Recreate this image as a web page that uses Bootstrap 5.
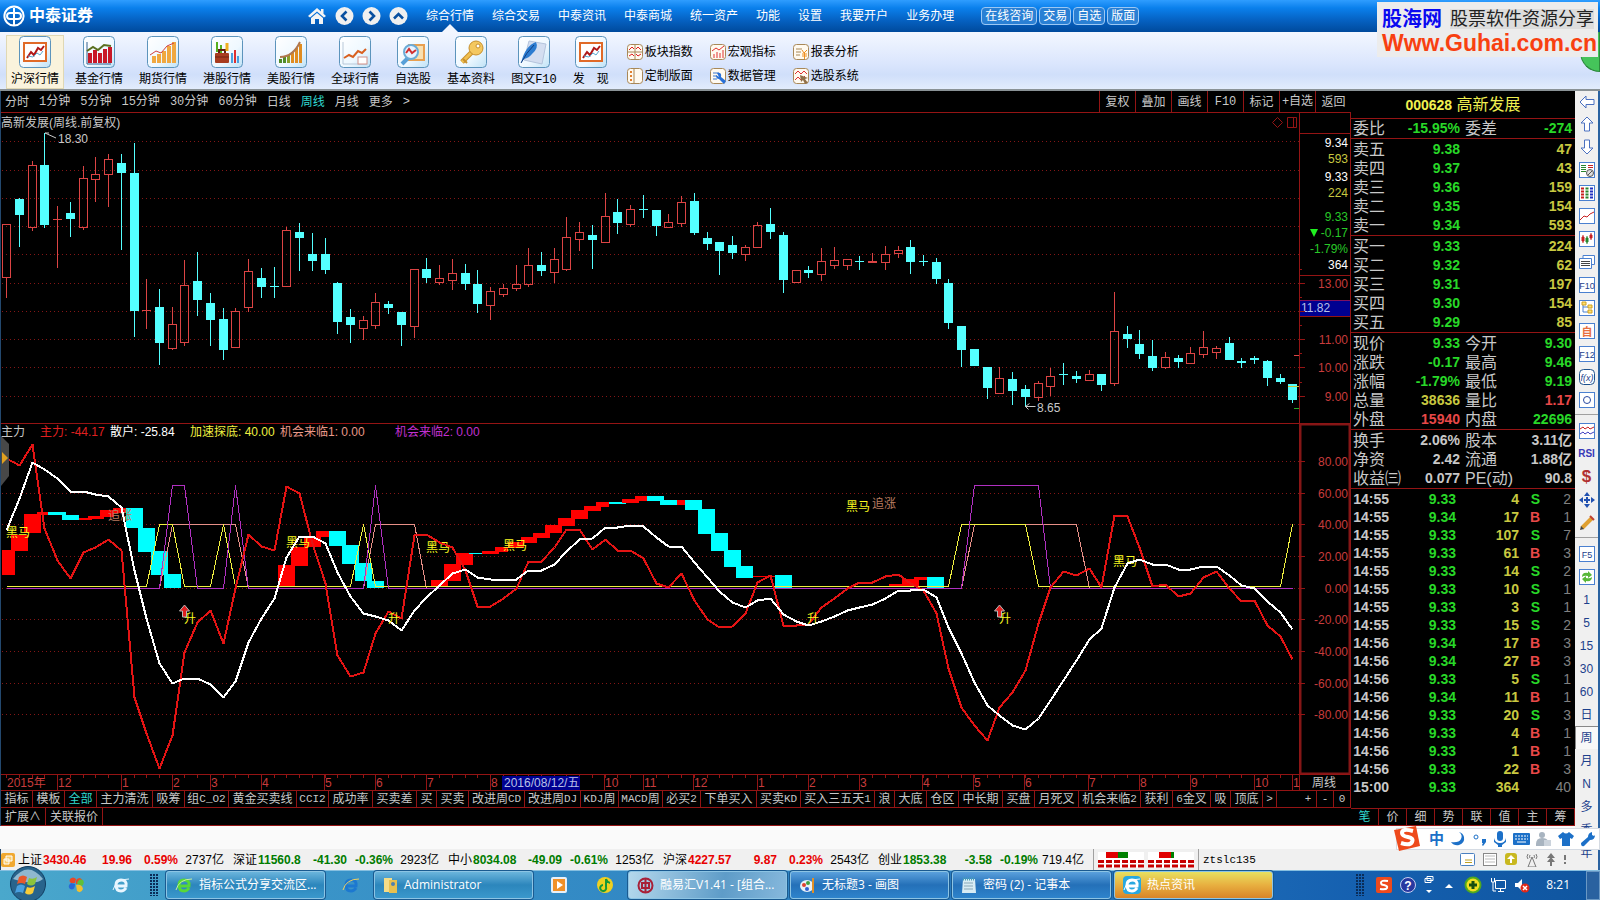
<!DOCTYPE html>
<html lang="zh-CN">
<head>
<meta charset="utf-8">
<meta name="viewport" content="width=device-width, initial-scale=1">
<title>中泰证券 - 高新发展</title>
<link rel="stylesheet" href="https://cdn.jsdelivr.net/npm/bootstrap@5.3.0/dist/css/bootstrap.min.css">
<style>
body{font:12px/16px "Liberation Sans","Noto Sans CJK SC",sans-serif;background:#000;color:#000}
a{color:inherit;text-decoration:none}
button{font:inherit;color:inherit;background:none;border:0;padding:0;white-space:nowrap}
svg{display:block;flex:none}
.half{font-family:"Liberation Mono",monospace;font-size:11px}
/* title bar */
.topbar{height:32px;background:linear-gradient(#2f9dff,#0a80ec 25%,#0560c0 65%,#004a9c);color:#fff}
.brandbox{width:307px;padding-left:3px}
.brandbox b{font-size:16px}
.navbtns{gap:8px}
.mainmenu{gap:18px;padding-left:18px}
.mainmenu a{line-height:32px;position:relative}
.mainmenu a.on::after{content:"";position:absolute;left:50%;bottom:0;margin-left:-8px;border:8px solid transparent;border-top:0;border-bottom-color:#f2f6fe}
.pills{gap:2px;padding-left:27px}
.pill{border:1px solid #9cc8f4;border-radius:4px;height:18px;line-height:16px;padding:0 3px;background:#2a80d4}
/* tool bar */
.tools{height:59px;background:linear-gradient(#f3f7ff,#dbe6fd 55%,#d0dffa 75%,#e2ecfc);border-bottom:2px solid #8a9296;padding-left:3px}
.tool{padding:4px 8px 0;text-align:center;line-height:19px}
.tool .half{font-size:12px}
.tool svg{margin:0 auto 2px}
.tool.on{background:#faf3dc;box-shadow:inset 0 0 0 1px #e0d8b4;margin:3px 3px 0 3px;padding:1px 5px 0}
.minitools{display:grid;grid-template-columns:repeat(3,83px);row-gap:8px;padding:12px 0 0 10px;align-content:start}
.minitools button{display:flex;gap:2px;align-items:center;height:16px}
/* watermark */
.mark-box{position:absolute;right:2px;top:2px;width:221px;height:55px;background:#ececec;padding:4px 0 0 5px;z-index:3;white-space:nowrap}
.mark-box .nm{font-size:20px;line-height:26px;font-weight:bold;color:#0a0af0}
.mark-box .sl{font-size:18px;line-height:20px;color:#222;background:#ddd}
.mark-box .ur{font-size:23px;line-height:22px;font-weight:bold;color:#f84010}
.orb{position:absolute;right:0;top:32px;width:20px;height:40px;border-radius:20px 0 0 20px;background:#45c45a;border:1px solid #2c8a3c;z-index:2}
/* charts */
.leftedge{border-left:1px solid #23486e;min-width:0}
.period{height:22px;border-bottom:1px solid #941414;color:#c8c8c8;line-height:20px}
.period .half{font-size:12px}
.period .rng{gap:10px;padding-left:4px}
.period .ops button{width:36px;border-left:1px solid #941414;text-align:center}
.on-c{color:#30d8d0!important}
.chart{width:100%;height:auto}
.chart text{font:12px "Liberation Sans","Noto Sans CJK SC",sans-serif}
.tabrow{border-top:1px solid #941414;height:17px;color:#c8c8c8;overflow:hidden}
.tabrow button{border-right:1px solid #941414;line-height:16px;display:flex;justify-content:center;align-items:center}
.tabrow.low{height:19px;border-bottom:1px solid #941414}
.tabrow.low button{line-height:16px;padding:0 4px}
/* quotes */
.side{width:224px;color:#c8c8c8;background:#000}
.side h1{font:16px/27px "Liberation Sans","Noto Sans CJK SC",sans-serif;height:28px;margin:0;color:#f0f050;border-bottom:1px solid #941414;text-align:center}
.side h1 b{font-size:14px}
.q{width:100%;table-layout:fixed;border-collapse:separate;border-spacing:0;border-bottom:1px solid #941414;padding-top:1px}
.q.first{padding:0}
.q td,.q th{padding:0;height:19px;line-height:19px;font-size:16px;font-weight:normal;white-space:nowrap}
.q th{padding-left:2px}
.q td{font-size:14px;font-weight:bold;text-align:right}
.q td:last-child{padding-right:3px}
.tk td{padding:0;height:18px;line-height:18px;font-size:14px;font-weight:bold;text-align:right}
.tk{width:100%;table-layout:fixed;margin-top:1px}
.g{color:#28d828}.y{color:#c8c840}.r{color:#e84848}.n{color:#808080}
.sidetabs{border-top:1px solid #941414;border-bottom:1px solid #941414;height:18px}
.sidetabs button{flex:1;border-right:1px solid #941414;line-height:16px}
/* right icon strip */
.strip{width:25px;background:#f0f0f0;border-right:2px solid #2a62a0;color:#1c3f8c}
.strip button{height:23px;width:23px;display:flex;align-items:center;justify-content:center}
.strip button:first-child{height:21px}
.strip .sep{height:8px;border:0;margin:0;opacity:1;background:linear-gradient(transparent 3px,#a0a0a0 3px,#a0a0a0 4px,transparent 4px)}
.strip .sel{background:#f8f8f8;box-shadow:inset 1px 1px #888}
/* bottom */
.blank{height:23px;background:#fafafa}
.ime{position:absolute;right:0;bottom:50px;width:204px;height:22px;background:#fff;border:1px solid #d5dbe3;z-index:4}
.ime>.logo{position:absolute;left:-4px;top:-4px}
.status{height:21px;background:#f0f0f0;line-height:22px}
.idx{display:grid;grid-template-columns:25px 46px 43px 46px 46px;width:215px;text-align:right;white-space:nowrap}
.idx span:first-child,.idx b:nth-child(2){text-align:left}
.up b{color:#e80000}.dn b{color:#007c00}
.lamps{border:solid #a0a0a0;border-width:0 1px}
.task{height:30px;background:linear-gradient(90deg,#4aa8cc,#3a94c8 20%,#2a7cc0 60%,#1560b0 85%,#0f559f);color:#fff;box-shadow:inset 0 1px #86bfe0;position:relative}
.task .win{width:159px;height:28px;margin-right:3px;border:1px solid #8cc4e4;border-radius:3px;background:linear-gradient(#6ab4dc,#2c86bc 50%,#3a98cc);text-align:left;padding-left:8px;display:flex;align-items:center;gap:6px;font-family:"Open Sans","Noto Sans CJK SC",sans-serif;box-shadow:0 0 0 1px #1a5a90}
.task .win.b{background:linear-gradient(#5aa0dc,#2470b8 50%,#2e84cc)}
.task .win.a{background:linear-gradient(100deg,#b4d8ec,#5e9cc8 60%,#86b8dc)}
.task .win.h{background:linear-gradient(#e8e060,#e8b040 50%,#d88428)}
.start{width:60px;height:30px;padding-left:9px}
.start svg{margin-top:-4px}
.deskbtn{width:14px;height:29px;border:1px solid #6a98c4;background:#2a62a0}
.dots{width:8px;height:22px;background:radial-gradient(circle at 1px 1px,#0a2c58 1px,transparent 1px) 0 0/3px 3px}
</style>
</head>
<body class="position-relative">
<header class="topbar d-flex align-items-center">
  <div class="brandbox d-flex align-items-center gap-1">
    <svg width="22" height="22" viewBox="0 0 22 22" fill="none" stroke="#fff" stroke-width="2"><circle cx="11" cy="11" r="9.6"/><path d="M11 3v17M7 8h8q3 0 3 3t-3 3H7q-3 0-3-3t3-3z"/></svg>
    <b>中泰证券</b>
  </div>
  <div class="navbtns d-flex">
    <button aria-label="首页"><svg width="20" height="20" viewBox="0 0 20 20" fill="#f4f4f4"><path d="M10 2 1 10l2 1.500 7-6 7 6 2-1.500-2.500-2.300V3H14v2.600z"/><path d="M4 12l6-5 6 5v6h-4v-5H8v5H4z"/></svg></button>
    <button aria-label="后退"><svg width="19" height="20" viewBox="0 0 19 20"><circle cx="9.500" cy="10" r="9" fill="#f0f0f0"/><path d="M11.500 5.500 7 10l4.500 4.500" fill="none" stroke="#0a50a0" stroke-width="2.600"/></svg></button>
    <button aria-label="前进"><svg width="19" height="20" viewBox="0 0 19 20"><circle cx="9.500" cy="10" r="9" fill="#f0f0f0"/><path d="M7.500 5.500 12 10l-4.500 4.500" fill="none" stroke="#0a50a0" stroke-width="2.600"/></svg></button>
    <button aria-label="向上"><svg width="19" height="20" viewBox="0 0 19 20"><circle cx="9.500" cy="10" r="9" fill="#f0f0f0"/><path d="M5 12.500 9.500 8l4.500 4.500" fill="none" stroke="#0a50a0" stroke-width="2.600"/></svg></button>
  </div>
  <nav class="mainmenu d-flex">
    <a href="#" class="on">综合行情</a><a href="#">综合交易</a><a href="#">中泰资讯</a><a href="#">中泰商城</a><a href="#">统一资产</a><a href="#">功能</a><a href="#">设置</a><a href="#">我要开户</a><a href="#">业务办理</a>
  </nav>
  <div class="pills d-flex">
    <button class="pill">在线咨询</button><button class="pill">交易</button><button class="pill">自选</button><button class="pill">版面</button>
  </div>
</header>
<div class="mark-box"><div class="d-flex align-items-center gap-2"><span class="nm">股海网</span><span class="sl">股票软件资源分享</span></div><div class="ur">Www.Guhai.com.cn</div></div>
<div class="orb"></div>
<div class="tools d-flex" id="tools"></div>

<main class="d-flex">
  <div class="flex-grow-1" style="min-width:0">
    <div class="d-flex">
      <section class="leftedge flex-grow-1">
        <div class="period d-flex justify-content-between">
          <div class="rng d-flex" id="periods"></div>
          <div class="ops d-flex" id="ops"></div>
        </div>
        <svg class="chart" id="chart" viewBox="1 113 1350 677"></svg>
        <div class="tabrow d-flex"><div class="d-flex" id="tabs"></div>
          <div class="d-flex ms-auto" id="zoomers"></div></div>
        <div class="tabrow low d-flex"><button>扩展∧</button><button>关联报价</button></div>
      </section>
      <aside class="side d-flex flex-column">
        <h1><b>000628</b> 高新发展</h1>
        <div id="quotes"></div>
        <table class="tk" id="ticks"><colgroup><col style="width:38px"><col style="width:67px"><col style="width:63px"><col style="width:21px"><col></colgroup></table>
        <div class="sidetabs d-flex mt-auto"><button class="on-c">笔</button><button>价</button><button>细</button><button>势</button><button>联</button><button>值</button><button>主</button><button>筹</button></div>
      </aside>
    </div>
    <div class="blank"></div>
    <div class="status d-flex leftedge" id="status"></div>
  </div>
  <div class="strip" id="strip"></div>
</main>

<div class="ime d-flex align-items-center justify-content-between ps-4 pe-1">
  <svg class="logo" width="28" height="27" viewBox="0 0 28 27"><path d="M1 5 23 1l4 20-21 5z" fill="#ee4a1c"/><path d="M20 6q-11-3-11 2 0 3 6 4t4 5q-2 4-11 1" fill="none" stroke="#fff" stroke-width="4"/></svg>
  <span class="fw-bold ms-2" style="color:#1c70c8;font-size:15px">中</span>
  <svg width="16" height="16" fill="#1c70c8"><path d="M9 1q4 3 2 7T1 11q3 4 8 3 6-2 5-8-1-4-5-5z"/></svg>
  <svg width="14" height="16" fill="#1c70c8"><circle cx="3" cy="6" r="2" fill="none" stroke="#1c70c8"/><path d="M9 8h4v3l-3 4-1-1 1-2H9z"/></svg>
  <svg width="14" height="18" fill="#1c70c8"><rect x="4" y="1" width="6" height="10" rx="3"/><path d="M1 8q1 5 6 5t6-5v4l-4 3v2H5v-2l-4-3z"/></svg>
  <svg width="17" height="16"><rect x="0" y="2" width="17" height="12" rx="1" fill="#1c70c8"/><path d="M2 5h13M2 8h13" stroke="#fff" stroke-dasharray="2 1"/><path d="M4 11h9" stroke="#fff"/></svg>
  <svg width="15" height="16" fill="#a8b4c0"><circle cx="6" cy="4" r="3"/><path d="M0 13q0-6 6-6 5 0 6 3v5H0z"/><path d="M8 9h7v6H8z" fill="#cbd3dc"/></svg>
  <svg width="16" height="16" fill="#1c70c8"><path d="M5 1q3 3 6 0l5 4-2 3-2-1v8H4V7L2 8 0 5z"/></svg>
  <svg width="15" height="16" fill="#1c70c8"><path d="m1 12 7-6q0-4 4-5v3l2 1 1-1q0 5-5 5l-6 6q-3 1-3-3z"/></svg>
</div>

<footer class="task d-flex align-items-center" id="task"></footer>

<script src="https://cdn.jsdelivr.net/npm/bootstrap@5.3.0/dist/js/bootstrap.bundle.min.js"></script>
<script>
const $ = id => document.getElementById(id);
const half = s => s.replace(/[\x21-\x7e]+/g, m => `<span class="half">${m.replace('>', '&gt;')}</span>`);
const cells = s => [...s].reduce((n, c) => n + (c < '\x7f' ? 6 : 12), 0);

/* ---- tool bar ---- */
const redChart = '<rect x="5" y="7" width="22" height="18" fill="#fff" stroke="#e06a28" stroke-width="2"/><path d="M8 22l4-6 3 3 4-7 3 2 3-4" fill="none" stroke="#b01818" stroke-width="2"/><path d="M9 20l5 1 4-4 3 2 3-4" fill="none" stroke="#58a8d0"/>';
const bars = (c, h, x = 6, w = 4) => h.map((v, i) => `<rect x="${x + i * (w + 1)}" y="${27 - v}" width="${w}" height="${v}" fill="${c}"/>`).join('');
const toolArt = [
  redChart,
  '<path d="M4 6v22h24" fill="none" stroke="#346090"/>' + bars('#c81828', [10, 13, 10, 14, 16], 5) + '<path d="M4 15l6-4 5 3 6-5 7 1" fill="none" stroke="#5a7020" stroke-width="2"/>',
  bars('#f0a840', [7, 9, 12, 17, 21], 5) + '<path d="M3 19l6-4 5 2 6-7 7-3" fill="none" stroke="#d04040"/>',
  '<path d="M6 6v10M10 9v8" stroke="#58b020" stroke-width="2"/><rect x="4" y="17" width="14" height="10" rx="1" fill="#a83c20"/><path d="M4 21h14" stroke="#702010"/><path d="M8 17v-3h6v3" fill="none" stroke="#602010" stroke-width="2"/><path d="M16 7v8" stroke="#f0b020" stroke-width="3"/><path d="M21 27V17M27 27V20" stroke="#4aa0e0" stroke-width="2"/><path d="M24 27V14" stroke="#e03030" stroke-width="2"/>',
  bars('#508c28', [4, 6], 4, 3) + bars('#88a028', [8], 12, 3) + bars('#e08c20', [11, 15, 19], 16, 3) + '<path d="M5 21q13 0 20-15" fill="none" stroke="#b07850" stroke-width="2"/>',
  '<path d="M4 6v22h24" fill="none" stroke="#b8c8d8"/><path d="M5 22l5-3 4 2 5-6 4 2 4-4" fill="none" stroke="#d86020" stroke-width="2"/><rect x="19" y="21" width="9" height="7" fill="#fff" stroke="#d09088"/>',
  '<rect x="12" y="9" width="15" height="15" fill="#f8e0b0" stroke="#e8a050" stroke-width="2"/><path d="M5 28l6-6" stroke="#58a0d8" stroke-width="4"/><circle cx="14" cy="16" r="7" fill="#e8f4ff" stroke="#6aacd8" stroke-width="2"/><path d="M9 17l3-4 3 4 4-3" fill="none" stroke="#d03030" stroke-width="2"/>',
  '<path d="M18 15 7 26" stroke="#c8902c" stroke-width="5"/><path d="M18 15 7 26" stroke="#f0c050" stroke-width="3"/><path d="M8 23l4 4" stroke="#c8902c" stroke-width="2"/><circle cx="21" cy="12" r="7" fill="#f4c860" stroke="#c8902c"/><circle cx="23" cy="10" r="2" fill="#fff" stroke="#c8902c"/>',
  '<path d="M11 5l17 3-4 20-18-4z" fill="#d4def0" stroke="#b4c4dc"/><path d="M3 27Q7 10 18 6q3 6-4 12-3 4-8 5z" fill="#2c7cd0"/><path d="M3 27Q8 17 16 9" fill="none" stroke="#103c80"/>',
  redChart];
const toolNames = ['沪深行情', '基金行情', '期货行情', '港股行情', '美股行情', '全球行情', '自选股', '基本资料', '图文F10', '发　现'];
$('tools').innerHTML = `<svg width="0" height="0" class="position-absolute"><linearGradient id="tile" x2="1" y2="1"><stop stop-color="#fff"/><stop offset=".6" stop-color="#eef8ff"/><stop offset="1" stop-color="#bfe2f6"/></linearGradient></svg>` +
  toolNames.map((n, i) => `<button class="tool${i ? '' : ' on'}"><svg width="32" height="32" viewBox="0 0 32 32"><rect x=".5" y=".5" width="31" height="31" rx="4" fill="url(#tile)" stroke="#5c94bc"/>${toolArt[i]}</svg>${half(n)}</button>`).join('');
const tileR = '<rect x=".5" y=".5" width="15" height="15" rx="3" fill="#fffaf0" stroke="#a88858"/>';
const miniArt = {
  板块指数: '<path d="M8 1v14M1 8h14" stroke="#a88858"/><path d="M2 6l3-3 2 2M9 5l2-2 3 3M2 12l3-2 2 2M9 10l2 2 3-2" fill="none" stroke="#e02020"/>',
  宏观指标: '<path d="M4 14v-4M7 14V8M10 14v-5M13 14V6M2 7l4-3 3 2 5-4" fill="none" stroke="#e03030"/>',
  报表分析: '<path d="M3 5h6M3 8h5M3 11h4" stroke="#a88858"/><path d="M9 6l2 3 3-3M9 10h5M9 12h5M11.500 9v6" stroke="#f09020" fill="none"/>',
  定制版面: '<path d="M7 1v14" stroke="#a88858"/><path d="M4 3v10" stroke="#e08030" stroke-width="2" stroke-dasharray="2 2"/>',
  数据管理: '<path d="M3 5h6M3 8h4M3 11h4" stroke="#3878d0"/><path d="M7 5q5-1 4 4l5 4-2 3-5-5q-3 0-3-4l3 2z" fill="#2870d8"/>',
  选股系统: '<path d="M2 6l3-3 3 3 3-3 3 3M2 12l3-3 3 3 4-4" fill="none" stroke="#e03030"/><path d="M7 7l8 3-3 1 3 4-3 1-2-4-2 2z" fill="#907048"/>'};
$('tools').innerHTML += '<div class="minitools">' + Object.entries(miniArt).map(([n, a]) => `<button><svg width="16" height="16" viewBox="0 0 16 16">${tileR}${a}</svg>${n}</button>`).join('') + '</div>';

/* ---- period bar and tab rows ---- */
$('periods').innerHTML = ['分时', '1分钟', '5分钟', '15分钟', '30分钟', '60分钟', '日线', '周线', '月线', '更多', '>'].map(n => `<button class="${n == '周线' ? 'on-c' : ''}">${half(n)}</button>`).join('');
$('ops').innerHTML = ['复权', '叠加', '画线', 'F10', '标记', '+自选', '返回'].map(n => `<button>${half(n)}</button>`).join('');
$('tabs').innerHTML = '指标 模板 全部 主力清洗 吸筹 组C_O2 黄金买卖线 CCI2 成功率 买卖差 买 买卖 改进周CD 改进周DJ KDJ周 MACD周 必买2 下单买入 买卖KD 买入三五天1 浪 大底 仓区 中长期 买盘 月死叉 机会来临2 获利 6金叉 吸 顶底 >'.split(' ')
  .map(n => `<button class="${n == '全部' ? 'on-c' : ''}" style="width:${cells(n) + 8}px">${half(n)}</button>`).join('');
$('zoomers').innerHTML = ['+', '-', '0'].map(n => `<button style="width:17px">${half(n)}</button>`).join('');

/* ---- charts ---- */
const X = i => Math.floor(6.7 + i * 12.733) + .5;
const candles = `r224,224,277,297 c198,199,215,246 r161,165,227,230 c133,165,225,227 r206,219,220,267 c202,213,219,236 r166,178,227,229 r157,174,179,201 r154,159,174,206 c154,163,173,249 c143,173,311,336 r279,310,311,328 c289,307,343,364 r307,324,348,349 r260,285,342,345 c252,281,300,315 c293,303,320,345 c308,319,350,359 r308,311,347,347 r259,271,307,311 c268,278,287,297 c267,286,287,297 r227,230,286,286 c223,232,238,270 c233,254,261,270 c238,254,270,273 c282,283,322,333 c309,317,325,342 r316,320,328,339 r293,302,325,328 c301,304,308,313 c312,312,325,345 r269,269,326,337 c258,269,278,282 r265,278,282,284 r259,273,280,289 c264,273,284,289 c270,284,304,312 r287,291,305,319 r284,288,294,296 r265,284,288,290 r248,265,284,286 c252,265,271,275 r248,259,272,282 r217,237,269,270 r222,232,239,250 c225,235,240,268 r193,216,242,242 c199,212,223,233 r205,209,224,226 c195,209,210,217 c210,210,226,235 r214,222,227,227 r196,202,223,226 c193,201,233,234 c232,238,244,249 c242,242,251,274 c236,245,253,258 r245,247,254,260 r222,225,247,247 c208,224,232,238 c232,235,280,292 r270,270,282,282 c266,270,273,277 r248,261,274,280 r247,260,265,268 r259,259,265,269 c256,261,262,269 r253,261,263,263 r246,254,262,269 r246,250,253,257 c240,247,262,273 c255,261,262,265 c258,262,279,283 c279,283,323,328 c326,326,350,366 c349,349,366,366 c367,367,388,398 r367,378,393,393 c372,379,391,404 c385,389,397,406 r381,383,397,400 r368,376,386,395 c363,374,375,384 c371,376,379,382 r370,374,380,380 c374,374,385,390 r292,331,383,385 c326,334,339,347 c330,344,354,358 c340,356,368,370 r352,357,367,368 c355,358,362,367 r347,353,363,363 r331,347,354,357 r346,348,352,358 c337,343,360,360 c358,361,363,367 c356,358,360,363 c360,361,378,385 c374,378,382,383 c384,384,400,402`.split(' ');
const red = [458,465,444,528,560,578,552,547,539,550,697,733,768,735,652,622,610,643,588,534,546,550,486,493,543,583,655,676,672,633,611,618,535,534,542,547,570,606,606,598,588,561,561,547,529,529,549,539,550,550,558,583,587,573,600,619,627,626,613,582,575,625,625,624,607,598,588,582,582,576,574,583,590,613,668,707,725,740,707,692,670,623,587,571,575,568,587,515,516,547,586,584,596,593,577,571,588,601,600,625,636,659];
const white = [530,498,462,469,478,491,491,494,496,507,570,618,663,683,678,678,684,697,681,642,618,598,557,536,536,543,572,596,613,616,620,630,610,597,585,573,569,577,579,579,579,570,570,564,551,539,538,527,527,525,526,537,546,546,562,577,591,602,607,600,598,614,621,625,621,616,610,607,604,598,590,590,589,597,627,653,682,705,715,725,729,718,700,680,660,639,628,587,563,559,564,564,569,569,566,566,575,585,588,601,612,629];
const signal = (base, top, spans) => Array.from({length: 102}, (_, i) => spans.some(([a, b]) => i >= a && i <= b) ? top : base);
const blocks = `r2,15,550,575 r11,28,535,551 r24,41,514,533 r37,49,512,515 c48,66,512,515 c62,79,515,520 r79,92,518,520 r88,104,516,519 r100,114,510,517 r113,130,508,513 c126,143,508,528 c138,155,528,552 c151,168,551,575 c164,181,574,588 r278,295,565,587 r291,308,547,566 r304,321,537,547 r316,329,531,537 c329,346,531,546 c342,359,545,564 c355,372,563,581 c367,384,581,588 r431,448,580,586 r444,461,564,581 r456,473,553,565 c469,486,553,554 r482,499,551,554 r495,508,547,552 r508,524,542,548 r521,537,537,543 r533,550,533,538 r545,562,525,533 r558,575,518,526 r571,588,510,519 r584,601,506,511 r596,609,502,507 c609,626,502,504 r622,639,499,503 r635,647,496,501 c647,664,496,501 c660,677,500,505 r677,685,500,505 c685,702,500,510 c698,715,509,534 c711,728,533,551 c724,741,550,567 c736,753,566,578 r753,775,576,577 c775,792,575,588 r889,907,584,587 r902,919,579,586 r914,927,577,580 c927,944,577,588`.split(' ');
const path = (ys, c, w) => `<polyline points="${ys.map((y, i) => X(i) + ',' + (y + .5)).join(' ')}" fill="none" stroke="${c}" stroke-width="${w}" stroke-linejoin="bevel" shape-rendering="crispEdges"/>`;
const T = (x, y, s, c, a = 'start') => `<text x="${x}" y="${y + 4}" fill="${c}" text-anchor="${a}">${s}</text>`;
const L = (x1, y1, x2, y2, c = '#941414', w = 1) => `<path d="M${x1} ${y1}L${x2} ${y2}" stroke="${c}" stroke-width="${w}"/>`;
let s = '<rect x="1" y="113" width="1350" height="677"/>';
for (const y of [141,170,198,226,254,283,311,339,367,396,461,493,524,556,588,619,651,683,714])
  s += `<path d="M2 ${y + .5}H1299" stroke="#841616" stroke-dasharray="1 3"/>`;
candles.forEach((k, i) => {
  const [h, t, b, l] = k.slice(1).split(',').map(Number), x = X(i), up = k[0] == 'r', c = up ? '#dc4444' : '#54ffff';
  s += L(x, h, x, t, c) + L(x, b, x, l + (l > b), c);
  if (up && b - t > 2) s += `<rect x="${x - 4}" y="${t + .5}" width="8" height="${b - t}" fill="none" stroke="${c}"/>`;
  else s += `<rect x="${x - 4.5}" y="${t}" width="9" height="${Math.max(1, b - t)}" fill="${c}"/>`;
});
s += L(45, 133, 56, 138, '#c8c8c8') + L(45, 133, 49, 133, '#c8c8c8') + T(58, 139, '18.30', '#c8c8c8') + T(1, 123, '高新发展(周线.前复权)', '#c8c8c8');
s += '<path d="M1035.500 406.500h-10l4-3m-4 3l3 3" fill="none" stroke="#c8c8c8"/>' + T(1037, 408, '8.65', '#c8c8c8');
s += '<path d="M1277.500 117.500l5 5-5 5-5-5zM1287.500 117.500h9v10h-9zM1293.500 117v10" fill="none" stroke="#941414"/>';
s += L(1288, 386.5, 1299, 386.5, '#c8c840') + L(1294, 355.5, 1299, 355.5, '#dc4444') + L(1294, 408.5, 1299, 408.5, '#28a828');
/* price scale */
s += L(1299.5, 113, 1299.5, 790) + L(1350.5, 113, 1350.5, 790) + L(1299, 133.5, 1350, 133.5) + L(1299, 275.5, 1350, 275.5);
[[143,'9.34','#fff'],[159,'593','#c8c840'],[177,'9.33','#fff'],[193,'224','#c8c840'],[217,'9.33','#28c828'],[233,'-0.17','#28c828'],[249,'-1.79%','#28c828'],[265,'364','#fff'],[284,'13.00','#c83c3c'],[340,'11.00','#c83c3c'],[368,'10.00','#c83c3c'],[397,'9.00','#c83c3c']].forEach(a => s += T(1348, a[0], a[1], a[2], 'end'));
s += '<path d="M1310 229h8l-4 8z" fill="#20f020"/><rect x="1300" y="301" width="50" height="15" fill="#000090"/>' + L(1300, 300.5, 1350, 300.5, '#801060') + L(1300, 316.5, 1350, 316.5) + T(1301, 308, '11.82', '#b8c0e8');
for (const y of [283, 311, 339, 367, 396]) s += L(1299, y + .5, 1305, y + .5) + L(1299, y - 13.5, 1302, y - 13.5);
/* indicator pane */
s += L(1, 423.5, 1350, 423.5) + '<rect x="1300.500" y="424.500" width="49" height="349" fill="none" stroke="#841616" stroke-width="2"/>';
[461,493,524,556,588,619,651,683,714].forEach((y, i) => s += L(1299, y + .5, 1305, y + .5) + T(1348, y + 1, (80 - i * 20).toFixed(2), '#c83c3c', 'end'));
for (const k of blocks) { const [a, b, t, d] = k.slice(1).split(',').map(Number); s += `<rect x="${a}" y="${t}" width="${b - a}" height="${d - t}" fill="${k[0] == 'r' ? '#f00' : '#0ff'}"/>`; }
const heima = [[6,533],[286,543],[426,548],[503,546],[846,507],[1113,562]];
s += T(108, 516, '追涨', '#b87c60') + T(872, 504, '追涨', '#b87c60');
for (const [x, y] of heima) s += T(x, y, '黑马', '#f8f820');
s += path(signal(588, 524, [[13,18],[29,32],[76,84]]), '#e89088', 1) + path(signal(586, 524, [[12,13],[17,17],[28,28],[75,80],[101,101]]), '#f0f040', 1) + path(signal(588, 485, [[13,14],[18,18],[29,29],[76,81]]), '#b030c0', 1);
s += path(red, '#e41414', 2) + path(white, '#fff', 2);
for (const x of [184, 388, 807, 999]) s += T(x, 619, '升', '#f8f820');
for (const x of [184.5, 999.5]) s += `<path d="M${x} 605l5 6h-3v6h-4v-6h-3z" fill="#e02020" stroke="#b8b8b8"/>`;
s += T(1, 432, '主力', '#c8c8c8') + T(40, 432, '主力: -44.17', '#e02020') + T(110, 432, '散户: -25.84', '#fff') + T(190, 432, '加速探底: 40.00', '#f0f040') + T(280, 432, '机会来临1: 0.00', '#e89888') + T(395, 432, '机会来临2: 0.00', '#c030d0');
s += '<path d="M1 436l8 8v32l-8 10z" fill="#484848"/><path d="M2 452l6 6-6 6z" fill="#e0a020"/>';
/* date axis */
s += L(1, 774.5, 1350, 774.5);
for (let i = 0; i < 102; i++) s += L(X(i), 775, X(i), 778);
s += T(7, 783, '2015年', '#c83c3c');
[[57,12],[121,1],[172,2],[210,3],[261,4],[324,5],[375,6],[426,7],[490,8],[604,10],[643,11],[693,12],[757,1],[808,2],[859,3],[922,4],[973,5],[1024,6],[1088,7],[1139,8],[1190,9],[1254,10],[1292,1]].forEach(([x, m]) => s += L(x + .5, 775, x + .5, 790) + T(x + 1, 783, m, '#c83c3c'));
s += '<rect x="502" y="776" width="78" height="14" fill="#000090"/>' + T(504, 783, '2016/08/12/五', '#b8c0e8') + T(1312, 783, '周线', '#c8c8c8');
$('chart').innerHTML = s;

/* ---- quotes and ticks ---- */
const group = (rows, cls = '') => `<table class="q ${cls}"><colgroup><col style="width:48px"><col style="width:61px"><col style="width:48px"><col></colgroup>` + rows.trim().split('\n').map(r => {
  const [a, v, c, b, w, d] = r.trim().split('|');
  return `<tr><th>${a}</th><td class="${c}">${v}</td><th style="padding-left:5px">${b}</th><td class="${d}">${w}</td></tr>`;
}).join('') + '</table>';
$('quotes').innerHTML =
  group('委比|-15.95%|g|委差|-274|g', 'first') +
  group(`卖五|9.38|g||47|y
  卖四|9.37|g||43|y
  卖三|9.36|g||159|y
  卖二|9.35|g||154|y
  卖一|9.34|g||593|y`) +
  group(`买一|9.33|g||224|y
  买二|9.32|g||62|y
  买三|9.31|g||197|y
  买四|9.30|g||154|y
  买五|9.29|g||85|y`) +
  group(`现价|9.33|g|今开|9.30|g
  涨跌|-0.17|g|最高|9.46|g
  涨幅|-1.79%|g|最低|9.19|g
  总量|38636|y|量比|1.17|r
  外盘|15940|r|内盘|22696|g`) +
  group(`换手|2.06%||股本|3.11亿|
  净资|2.42||流通|1.88亿|
  收益㈢|0.077||PE(动)|90.8|`);
$('ticks').innerHTML += '55,9.33,4,S,2 55,9.34,17,B,1 55,9.33,107,S,7 55,9.33,61,B,3 55,9.33,14,S,2 55,9.33,10,S,1 55,9.33,3,S,1 55,9.33,15,S,2 56,9.34,17,B,3 56,9.34,27,B,3 56,9.33,5,S,1 56,9.34,11,B,1 56,9.33,20,S,3 56,9.33,4,B,1 56,9.33,1,B,1 56,9.33,22,B,3 00,9.33,364,,40'.split(' ').map(r => {
  const [m, p, v, d, n] = r.split(',');
  return `<tr><td>${m == '00' ? 15 : 14}:${m}</td><td class="g">${p}</td><td class="y">${v}</td><td class="${d == 'S' ? 'g' : 'r'}">${d}</td><td class="n fw-normal pe-1">${n}</td></tr>`;
}).join('');

/* ---- icon strip ---- */
const fr = a => `<svg width="16" height="16" viewBox="0 0 16 16" fill="none"><rect x=".5" y=".5" width="15" height="15" fill="#fff" stroke="#4a80d0"/>${a}</svg>`;
const ic = a => `<svg width="16" height="16" viewBox="0 0 16 16" fill="none">${a}</svg>`;
const fx = t => fr(`<text x="8" y="12" font-size="9" text-anchor="middle" fill="#1c3f8c">${t}</text>`);
const stripItems = [
  ic('<path d="M1 8l6-6v3.500h8v5H7V14z" fill="#fff" stroke="#4a70c0"/>'),
  ic('<path d="M8 1l6 6h-3.500v8h-5V7H2z" fill="#fff" stroke="#4a70c0"/>'),
  ic('<path d="M8 15l6-6h-3.500V1h-5v8H2z" fill="#fff" stroke="#4a70c0"/>'),
  fr('<path d="M2 3.500h5M2 5.500h5M2 7.500h5M2 9.500h5" stroke="#28862c"/><path d="M9 3.500h5M9 5.500h5" stroke="#c82020"/><circle cx="11" cy="11" r="3.500" fill="#ddd" stroke="#555"/><path d="M9 13l4-4" stroke="#555"/>'),
  fr('<path d="M2 3.500h3M2 6.500h3M2 9.500h3M2 12.500h3" stroke="#c82020" stroke-width="2"/><path d="M6.500 3.500h3M6.500 6.500h3M6.500 9.500h3M6.500 12.500h3" stroke="#28862c" stroke-width="2"/><path d="M11 3.500h3M11 6.500h3M11 9.500h3M11 12.500h3" stroke="#2030c0" stroke-width="2"/>'),
  fr('<path d="M1 12l4-4 3 1 3-3 4-2" stroke="#c82020"/>'),
  fr('<path d="M4 4v8M12 2v7" stroke="#c82020"/><path d="M8 5v8" stroke="#28862c"/><path d="M3 6h2v4H3zM11 4h2v3h-2z" fill="#c82020" stroke="#c82020"/><path d="M7 7h2v4H7z" fill="#28862c" stroke="#28862c"/>'),
  ic('<path d="M4 4V1.500h11.500v9H13" fill="#fff" stroke="#4a80d0"/><path d="M.5 4.500h12v10H.5z" fill="#fff" stroke="#4a80d0"/><path d="M2 7.500h9M2 9.500h9M2 11.500h9" stroke="#444"/>'),
  fx('F10'),
  fr('<path d="M4 2v10h5M4 7h5" stroke="#4a80d0"/><path d="M3 2h4v3H3zM9 5h4v3H9zM9 10h4v3H9z" fill="#ffe070" stroke="#d0a020"/>'),
  fr('<text x="8" y="12.500" font-size="11" font-weight="bold" text-anchor="middle" fill="#e87040">自</text>'),
  fx('F12'),
  ic('<rect x=".5" y=".5" width="15" height="15" rx="4" fill="#fff" stroke="#1c508c"/><text x="8" y="12" font-size="9" font-style="italic" text-anchor="middle" fill="#1c3f8c">f(x)</text>'),
  fr('<circle cx="8" cy="8" r="3.500" stroke="#2848a0"/>'), '-',
  fr('<path d="M1 6l3-2 2 2 3-2 2 2 4-2" stroke="#c82020"/><path d="M1 11l3-2 2 2 3-2 2 2 4-2" stroke="#4040c0"/>'),
  '<b style="font-size:10px;color:#3838b8">RSI</b>', '<b style="font-size:17px;color:#b03030">$</b>',
  ic('<path d="M8 0l3 4H5zM8 16l3-4H5zM0 8l4-3v6zM16 8l-4-3v6z" fill="#2050b0"/><path d="M5 8h6M8 5v6" stroke="#2050b0" stroke-width="2"/>'),
  ic('<path d="M3 13L13 3" stroke="#e0a030" stroke-width="4"/><path d="M11 1l4 4" stroke="#c04030" stroke-width="2"/><path d="M1 15l1-4 3 3z" fill="#444"/>'), '-',
  fx('F5'), fr('<path d="M3 8q0-5 6-4V2l4 4-4 3V7q-4-1-6 1zM13 8q0 5-6 4v2l-4-4 4-3v2q4 1 6-1z" fill="#58b838"/>'),
  '1', '5', '15', '30', '60', '日', '*周', '月', 'N', '多', '季', '年'];
$('strip').innerHTML = stripItems.map(t => t == '-' ? '<hr class="sep">' : `<button class="${t[0] == '*' ? 'sel' : ''}">${t.replace(/^\*/, '')}</button>`).join('');

/* ---- status bar ---- */
const lamp = (a, b) => `<svg width="46" height="16" class="me-1"><rect width="46" height="16" fill="#fff"/><rect x="${a}" width="12" height="6" fill="#e00000"/><rect x="${a + 12}" width="${b}" height="6" fill="#008000"/><path d="M0 9.500h46M0 14h46" stroke="#c80000" stroke-width="3" stroke-dasharray="6 2"/></svg>`;
$('status').innerHTML = '<div style="width:17px" class="pt-1"><svg width="14" height="14"><rect width="14" height="14" rx="2" fill="#f0a830"/><path d="M5 3h6v5H5zM3 6h5v5H3z" fill="#f8cc70" stroke="#fff"/></svg></div>' +
  '上证,3430.46,19.96,0.59%,2737亿 深证,11560.8,-41.30,-0.36%,2923亿 中小,8034.08,-49.09,-0.61%,1253亿 沪深,4227.57,9.87,0.23%,2543亿 创业,1853.38,-3.58,-0.19%,719.4亿'.split(' ').map(g => {
    const [n, a, b, c, d] = g.split(',');
    return `<div class="idx ${b[0] == '-' ? 'dn' : 'up'}"><span>${n}</span><b>${a}</b><b>${b}</b><b>${c}</b><span>${d}</span></div>`;
  }).join('') + `<div class="lamps d-flex align-items-center ps-1">${lamp(8, 10)}${lamp(11, 3)}</div><span class="ps-1 half">ztslc135</span>
  <div class="d-flex align-items-center gap-2 ms-auto pe-2">
    <svg width="15" height="13"><rect x=".5" y=".5" width="14" height="12" rx="1" fill="#fff" stroke="#4a80c0"/><path d="M5 7h7M5 9.500h7" stroke="#c0a020"/></svg>
    <svg width="14" height="13"><rect x=".5" y=".5" width="13" height="12" fill="#fff" stroke="#888"/><path d="M2 3h10M2 6h10M2 9h10" stroke="#bbb"/></svg>
    <svg width="12" height="13"><rect width="12" height="12" rx="3" fill="#c8b820"/><path d="M6 2l4 4H7v4H5V6H2z" fill="#fff"/></svg>
    <svg width="14" height="15" fill="none" stroke="#777"><path d="M7 5l-4 10h8zM3 2q-2 3 0 5M11 2q2 3 0 5M5 3q-1 2 0 3M9 3q1 2 0 3"/></svg>
    <svg width="8" height="13" fill="#777"><path d="M4 0l4 5H0zM4 4l4 5H0zM3 8h2v5H3z"/></svg>
    <svg width="4" height="13" fill="#777"><path d="M1 2h2v5H1zM1 9h2v2H1z"/></svg>
  </div>`;

/* ---- task bar ---- */
const e = (c, o = '#f0d060') => `<svg width="18" height="18" viewBox="0 0 18 18"><path d="M14 12q-2 3-5 3-5 0-5-6 0-5 5-5 6 0 5 6H5" fill="none" stroke="${c}" stroke-width="3"/><path d="M1 14Q4 3 17 3" fill="none" stroke="${o}"/></svg>`;
const win = (k, a, t) => `<button class="win ${k}">${a}<span>${t}</span></button>`;
$('task').innerHTML = `
<button class="start" aria-label="开始"><svg width="38" height="36" viewBox="0 0 38 36"><circle cx="19" cy="18" r="17.500" fill="#28648c" stroke="#103c60"/><path d="M4 13Q19-6 34 13 26 20 4 13z" fill="#90b8d0"/><path d="M10 11q4-3 8 0l-2 7q-4-2-8 0z" fill="#e8582c"/><path d="M20 12q4 2 8-1l-2 7q-4 3-8 0z" fill="#8cc43c"/><path d="M8 20q4-3 8 0l-2 7q-4-2-8 0z" fill="#48a0e0"/><path d="M18 21q4 2 8-1l-2 7q-4 3-8 0z" fill="#f8cc38"/></svg></button>
<button aria-label="360" style="width:32px"><svg width="18" height="20" class="mx-auto"><path d="M8 8Q1 9 3 4q3-3 6 0zM9 9q-1-6 4-6 4 2 2 6z" fill="#e84828"/><path d="M10 9q1-6 6-4 2 3-1 6z" fill="#60c038"/><path d="M8 9q0 7-5 5-3-3 1-6z" fill="#2868d8"/><path d="M9 10q6-1 7 4-2 5-6 2z" fill="#f0c030"/></svg></button>
<button aria-label="浏览器" style="width:58px" class="d-flex justify-content-center">${e('#e8f6ff', '#e8f6ff')}</button>
<div class="dots me-2"></div>
${win('', e('#58d838', '#c8f0a0'), '指标公式分享交流区...')}
<div style="width:46px" class="d-flex justify-content-center">${e('#1c78d0')}</div>
${win('', '<svg width="15" height="18"><path d="M1 2h8v14H1z" fill="#f4dc88"/><path d="M6 4h8v13H6z" fill="#e8c050"/><circle cx="10" cy="8" r="2" fill="#5080b0"/></svg>', 'Administrator')}
<div style="width:92px" class="d-flex justify-content-around"><svg width="16" height="16"><rect width="16" height="16" rx="2" fill="#e8f0f8"/><rect x="2" y="2" width="12" height="12" fill="#f09028"/><path d="M6 4l6 4-6 4z" fill="#fff"/></svg><svg width="16" height="16"><circle cx="8" cy="8" r="8" fill="#f0d020"/><path d="M9 2q1 3 4 4M9 2v8a3 3 0 1 1-3-2" stroke="#189838" stroke-width="2" fill="none"/></svg></div>
${win('a', '<svg width="17" height="17" fill="none" stroke="#a82038" stroke-width="2"><circle cx="8.500" cy="8.500" r="7"/><path d="M8.500 2v13M5 6h7v5H5z"/></svg>', '融易汇V1.41 - [组合...')}
${win('b', '<svg width="17" height="17"><ellipse cx="8" cy="9" rx="7" ry="6" fill="#e8f0f8"/><circle cx="5" cy="8" r="2" fill="#e04030"/><circle cx="9" cy="6" r="2" fill="#40a040"/><circle cx="8" cy="12" r="2" fill="#3060d0"/><path d="M14 1v15" stroke="#e09028" stroke-width="2"/></svg>', '无标题3 - 画图')}
${win('b', '<svg width="16" height="17"><path d="M2 2h12l1 14H1z" fill="#d8ecf4"/><path d="M3 6h9M3 9h9M3 12h9" stroke="#88a8b8"/><path d="M2 2h12" stroke="#48a0b8" stroke-width="3" stroke-dasharray="1 1"/></svg>', '密码 (2) - 记事本')}
${win('h', '<span style="background:#28a8e0;border-radius:4px">' + e('#fff', '#fff') + '</span>', '热点资讯')}
<div class="d-flex align-items-center ms-auto gap-2">
  <div class="dots me-1"></div>
  <svg width="16" height="16"><rect width="16" height="16" rx="2" fill="#ee4a1c"/><path d="M12 4q-7-1-7 1.500T8 8q4 1 3 3t-7 1" fill="none" stroke="#fff" stroke-width="2"/></svg>
  <svg width="16" height="16"><circle cx="8" cy="8" r="7.500" fill="#2838a0" stroke="#c8d0f0"/><text x="8" y="12.500" text-anchor="middle" font-size="12" font-weight="bold" fill="#fff">?</text></svg>
  <svg width="10" height="20" fill="none" stroke="#fff"><path d="M3 1.500h6v4H3zM1 3.500h6v4H1z"/><path d="M2 15h6l-3 3z" fill="#fff" stroke="none"/></svg>
  <svg width="14" height="8" fill="#fff"><path d="M3 7h8L7 3z"/></svg>
  <svg width="18" height="18"><circle cx="9" cy="9" r="8.500" fill="#50a820"/><circle cx="9" cy="9" r="6.500" fill="#f0e020"/><path d="M9 5v8M5 9h8" stroke="#185010" stroke-width="3"/></svg>
  <svg width="16" height="16" fill="none" stroke="#fff"><path d="M5.500 3.500h10v8h-10zM8 14.500h6M10.500 12v2M1.500 1v4h3V1M3 5v9h3"/></svg>
  <svg width="16" height="16"><path d="M1 6h3l4-4v12l-4-4H1z" fill="#fff"/><circle cx="11" cy="11" r="4.500" fill="#e02818"/><path d="M9 9l4 4M13 9l-4 4" stroke="#fff" stroke-width="1.500"/></svg>
  <span class="ps-2 pe-3" style="font-family:'Open Sans',sans-serif">8:21</span>
</div>
<button class="deskbtn" aria-label="显示桌面"></button>`;
</script>
</body>
</html>
